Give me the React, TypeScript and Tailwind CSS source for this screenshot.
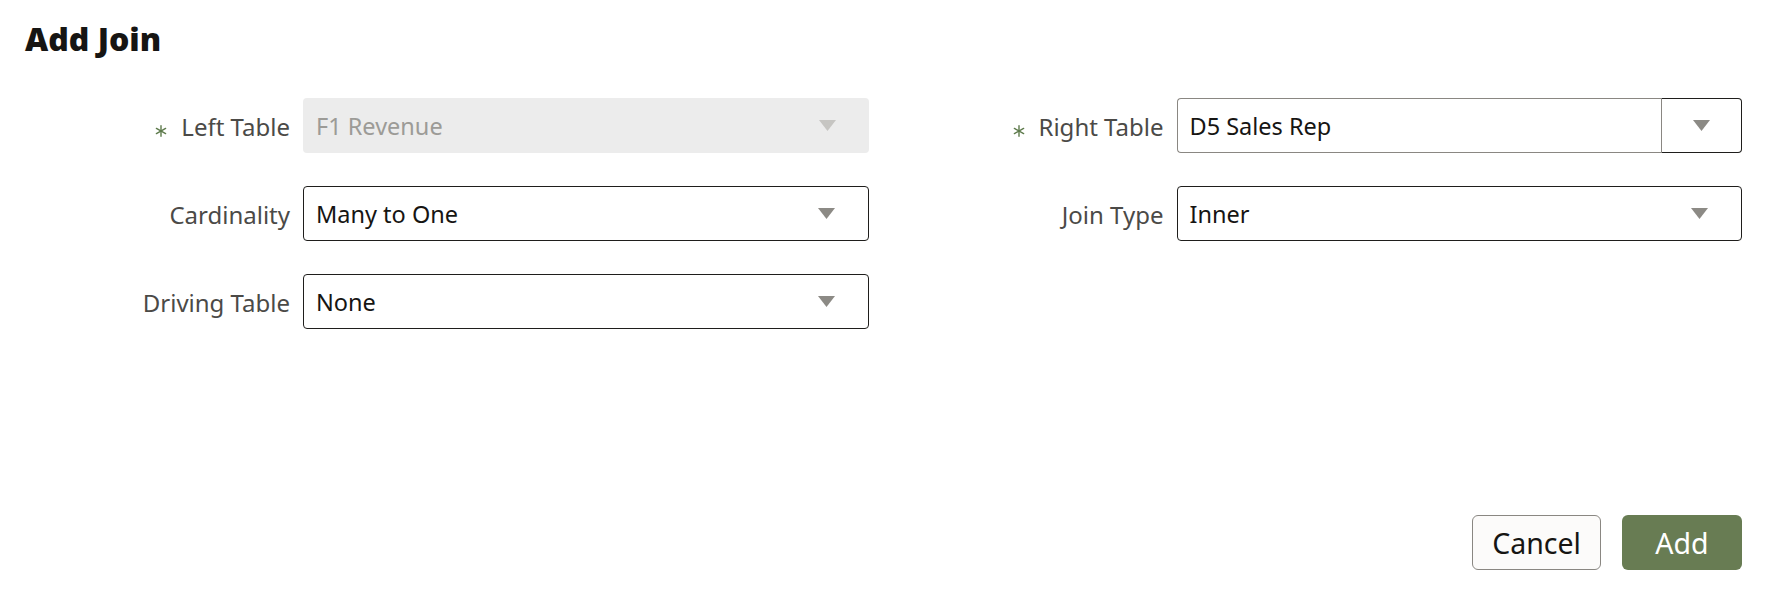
import React from "react";

const Arrow = ({ color }: { color: string }) => (
  <svg width="17" height="11" viewBox="0 0 17 11" aria-hidden>
    <polygon points="0,0 17,0 8.5,11" fill={color} />
  </svg>
);

const Asterisk = () => (
  <svg width="12" height="12" viewBox="0 0 12 12" aria-hidden className="mr-[14px] mt-[8px]">
    <g stroke="#5d7a4b" strokeWidth="1.4" strokeLinecap="round">
      <line x1="6" y1="0.8" x2="6" y2="11.2" />
      <line x1="1.4" y1="3.4" x2="10.6" y2="8.6" />
      <line x1="1.4" y1="8.6" x2="10.6" y2="3.4" />
    </g>
  </svg>
);

const Label = ({ text, required }: { text: string; required?: boolean }) => (
  <div className="w-[262px] shrink-0 flex items-center justify-end text-[24px] text-[#4b4a47] pt-[3px]">
    {required && <Asterisk />}
    <span>{text}</span>
  </div>
);

const Select = ({ value }: { value: string }) => (
  <div className="flex-1 h-[55px] rounded-[4px] border-[1.5px] border-[#1f1e1c] bg-white flex items-center pl-[12px] pr-[33px]">
    <span className="flex-1 text-[23.5px] text-[#161513] pt-[3px]">{value}</span>
    <Arrow color="#8c8a85" />
  </div>
);

export default function App() {
  return (
    <div
      className="w-[1770px] h-[590px] bg-white flex flex-col px-[28px]"
      style={{ fontFamily: '"Noto Sans", "Open Sans", sans-serif' }}
    >
      <h1 className="text-[32px] font-black text-[#161513] leading-none pt-[23px] -ml-[3px]">
        Add Join
      </h1>
      <div className="grid grid-cols-2 gap-x-[33px] gap-y-[33px] mt-[43px]">
        <div className="flex items-center gap-[13px]">
          <Label text="Left Table" required />
          <div className="flex-1 h-[55px] rounded-[4px] bg-[#ececec] flex items-center pl-[13px] pr-[33px]">
            <span className="flex-1 text-[23.5px] text-[#9c9b97] pt-[3px]">F1 Revenue</span>
            <Arrow color="#c6c5c2" />
          </div>
        </div>
        <div className="flex items-center gap-[13px]">
          <Label text="Right Table" required />
          <div className="flex-1 h-[55px] flex">
            <div className="flex-1 rounded-l-[4px] border border-r-0 border-[#8a8782] flex items-center pl-[12px]">
              <span className="text-[23.5px] text-[#161513] pt-[3px]">D5 Sales Rep</span>
            </div>
            <div className="w-[81px] rounded-r-[4px] border-[1.5px] border-l border-[#1f1e1c] border-l-[#8a8782] flex items-center justify-center">
              <Arrow color="#8c8a85" />
            </div>
          </div>
        </div>
        <div className="flex items-center gap-[13px]">
          <Label text="Cardinality" />
          <Select value="Many to One" />
        </div>
        <div className="flex items-center gap-[13px]">
          <Label text="Join Type" />
          <Select value="Inner" />
        </div>
        <div className="flex items-center gap-[13px]">
          <Label text="Driving Table" />
          <Select value="None" />
        </div>
        <div />
      </div>
      <div className="flex-1" />
      <div className="flex justify-end gap-[21px] pb-[20px]">
        <button className="w-[129px] h-[55px] rounded-[6px] border-[1.5px] border-[#8a8782] bg-[#fcfbfa] text-[28.5px] text-[#161513] pt-[2px]">
          Cancel
        </button>
        <button className="w-[120px] h-[55px] rounded-[6px] bg-[#687c53] text-[28.5px] text-white pt-[2px]">
          Add
        </button>
      </div>
    </div>
  );
}
